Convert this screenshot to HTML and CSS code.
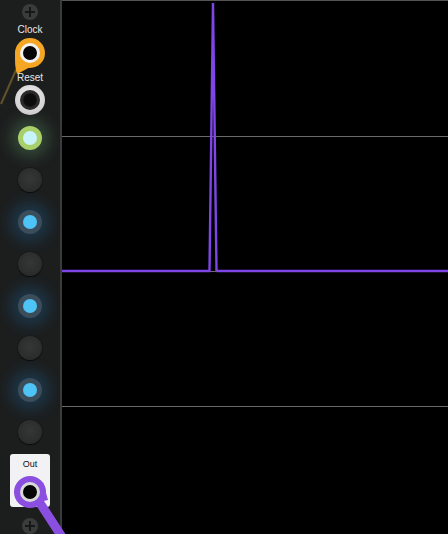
FILE: index.html
```html
<!DOCTYPE html>
<html>
<head>
<meta charset="utf-8">
<link rel="stylesheet" href="styles.css">
</head>
<body>
<div class="module">
  <div class="panel">
    <div class="screw screw-top"></div>
    <div class="label label-clock">Clock</div>
    <div class="jack jack-clock plugged-orange"><div class="hole"></div></div>
    <div class="label label-reset">Reset</div>
    <div class="jack jack-reset"><div class="hole"></div></div>
    <div class="lights">
      <div class="light light-green"><div class="lens"></div></div>
      <div class="light light-off"></div>
      <div class="light light-blue"><div class="lens"></div></div>
      <div class="light light-off"></div>
      <div class="light light-blue"><div class="lens"></div></div>
      <div class="light light-off"></div>
      <div class="light light-blue"><div class="lens"></div></div>
      <div class="light light-off"></div>
    </div>
    <div class="outbox">
      <div class="label label-out">Out</div>
      <div class="jack jack-out plugged-purple"><div class="hole"></div></div>
    </div>
    <div class="screw screw-bottom"></div>
    <svg class="cables" width="70" height="534" viewBox="0 0 70 534">
      <line x1="16" y1="70" x2="1" y2="104" stroke="#6e5a2c" stroke-width="2" stroke-opacity="0.85"/>
      <path d="M15.5 50 Q14 66 17 74 Q21 72 34 65 Z" fill="#f5a623"/>
      <path d="M43 482 L48 500 L30 504 Z" fill="#8a4fe0"/>
      <line x1="38" y1="500" x2="64" y2="540" stroke="#8a4fe0" stroke-width="9" stroke-linecap="round"/>
    </svg>
  </div>
  <div class="display">
    <svg class="scope" width="386" height="534" viewBox="0 0 386 534">
      <line x1="0" y1="136.5" x2="386" y2="136.5" stroke="#6a6a6a" stroke-width="1"/>
      <line x1="0" y1="271.5" x2="386" y2="271.5" stroke="#6a6a6a" stroke-width="1"/>
      <line x1="0" y1="406.5" x2="386" y2="406.5" stroke="#6a6a6a" stroke-width="1"/>
      <polyline points="0,271 147.5,271 151,3 154.5,271" fill="none" stroke="#7f45e6" stroke-width="2.4" stroke-linejoin="miter"/>
      <polyline points="154.5,271 386,271" fill="none" stroke="#7f45e6" stroke-width="2.4"/>
    </svg>
  </div>
</div>
</body>
</html>
```

FILE: styles.css
```css
html, body {
  margin: 0;
  padding: 0;
  background: #000;
}
body {
  width: 448px;
  height: 534px;
  overflow: hidden;
  font-family: "Liberation Sans", Arial, sans-serif;
}
.module {
  display: flex;
  width: 448px;
  height: 534px;
}
.panel {
  position: relative;
  width: 60px;
  flex: 0 0 60px;
  height: 534px;
  background: #1c1e1e;
  border-right: 2px solid #3a3b3b;
  display: flex;
  flex-direction: column;
  align-items: center;
}
.display {
  flex: 1;
  height: 534px;
  background: #000;
  border-top: 1px solid #555;
  box-sizing: border-box;
  overflow: hidden;
}
.scope {
  display: block;
  margin-top: -1px;
}
.screw {
  width: 16px;
  height: 16px;
  border-radius: 50%;
  background: #3a3c3c;
  position: relative;
  flex: none;
}
.screw::before, .screw::after {
  content: "";
  position: absolute;
  background: #161717;
  left: 50%;
  top: 50%;
}
.screw::before {
  width: 10px;
  height: 2px;
  margin: -1px 0 0 -5px;
}
.screw::after {
  width: 2px;
  height: 10px;
  margin: -5px 0 0 -1px;
}
.screw-top { margin-top: 4px; }
.screw-bottom { margin-top: 11px; }
.label {
  font-size: 10px;
  line-height: 12px;
  color: #e6e6e6;
  text-align: center;
  flex: none;
}
.label-clock { margin-top: 4px; }
.label-reset { margin-top: 4px; }
.label-out {
  color: #111;
  font-size: 9px;
  line-height: 11px;
  margin-top: 5px;
}
.jack {
  position: relative;
  z-index: 2;
  width: 30px;
  height: 30px;
  border-radius: 50%;
  flex: none;
  display: flex;
  align-items: center;
  justify-content: center;
  box-sizing: border-box;
}
.jack .hole {
  width: 20px;
  height: 20px;
  border-radius: 50%;
  box-sizing: border-box;
  background: #050505;
}
.jack-clock { margin-top: 2px; }
.jack-reset {
  margin-top: 1px;
  background: radial-gradient(circle at 50% 40%, #f4f4f4 0%, #d0d0d0 70%, #a8a8a8 100%);
}
.jack-reset .hole {
  border: 3px solid #2a2a2a;
  background: radial-gradient(circle, #0c0c0c 55%, #333 100%);
}
.plugged-orange {
  background: #f5a623;
}
.plugged-orange .hole {
  border: 3px solid #f2f2f2;
}
.plugged-purple {
  background: #8a4fe0;
  width: 32px;
  height: 32px;
}
.plugged-purple .hole {
  border: 3px solid #d8d8d8;
}
.lights {
  margin-top: 11px;
  display: flex;
  flex-direction: column;
  align-items: center;
  gap: 18px;
}
.light {
  width: 24px;
  height: 24px;
  border-radius: 50%;
  display: flex;
  align-items: center;
  justify-content: center;
  box-sizing: border-box;
}
.light .lens {
  width: 14px;
  height: 14px;
  border-radius: 50%;
}
.light-off {
  background: radial-gradient(circle at 50% 45%, #353636 0%, #2c2d2d 60%, #232424 100%);
  box-shadow: 0 1px 1px rgba(0,0,0,0.6), 0 0 0 1px #1a1a1a;
}
.light-green {
  background: #a9cf6a;
  box-shadow: 0 0 14px 8px rgba(100, 160, 110, 0.3);
}
.light-green .lens {
  background: #c9f3fb;
}
.light-blue {
  background: #3b4d5b;
  box-shadow: 0 0 14px 8px rgba(30, 110, 170, 0.3);
}
.light-blue .lens {
  background: #4ec3f5;
}
.outbox {
  margin-top: 10px;
  width: 40px;
  height: 53px;
  background: #f2f2f4;
  border-radius: 3px;
  display: flex;
  flex-direction: column;
  align-items: center;
  flex: none;
}
.jack-out { margin-top: 6px; }
.cables {
  position: absolute;
  left: 0;
  top: 0;
  z-index: 1;
  pointer-events: none;
  overflow: visible;
}
```
